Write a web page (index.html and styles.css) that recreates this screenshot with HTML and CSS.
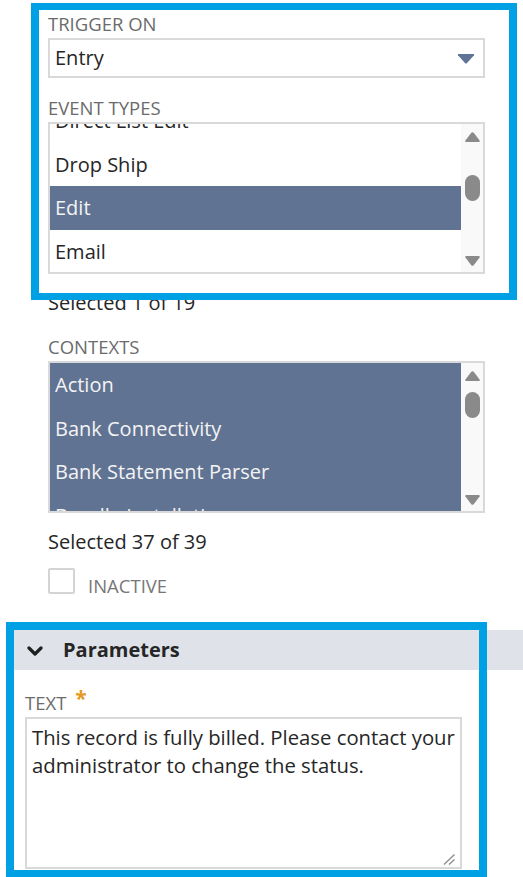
FILE: index.html
```html
<!DOCTYPE html>
<html lang="en">
<head>
<meta charset="utf-8">
<title>Workflow action</title>
<link rel="stylesheet" href="styles.css">
</head>
<body>
<div class="page">
  <section class="record">
    <div class="field">
      <div class="label">TRIGGER ON</div>
      <div class="select">
        <span class="select-value">Entry</span>
        <svg class="caret" width="18" height="10" viewBox="0 0 18 10"><path d="M1 1.2 Q0.4 0 1.8 0 H16.2 Q17.6 0 17 1.2 L9.8 9.2 Q9 10 8.2 9.2 Z" fill="#5f7394"/></svg>
      </div>
    </div>

    <div class="field field-gap">
      <div class="label">EVENT TYPES</div>
      <div class="listbox">
        <ul class="items items-scrolled">
          <li>Direct List Edit</li>
          <li>Drop Ship</li>
          <li class="selected">Edit</li>
          <li>Email</li>
        </ul>
        <div class="scrollbar">
          <svg class="arrow" width="15" height="10" viewBox="0 0 15 10"><path d="M6.3 0.8 Q7.5 -0.4 8.7 0.8 L14.6 8.4 Q15.2 10 13.6 10 H1.4 Q-0.2 10 0.4 8.4 Z" fill="#8a8a8a"/></svg>
          <div class="thumb thumb-events"></div>
          <svg class="arrow arrow-down" width="15" height="10" viewBox="0 0 15 10"><path d="M6.3 9.2 Q7.5 10.4 8.7 9.2 L14.6 1.6 Q15.2 0 13.6 0 H1.4 Q-0.2 0 0.4 1.6 Z" fill="#8a8a8a"/></svg>
        </div>
      </div>
      <div class="count">Selected 1 of 19</div>
    </div>

    <div class="field field-gap">
      <div class="label">CONTEXTS</div>
      <div class="listbox">
        <ul class="items">
          <li class="selected">Action</li>
          <li class="selected">Bank Connectivity</li>
          <li class="selected">Bank Statement Parser</li>
          <li class="selected">Bundle Installation</li>
        </ul>
        <div class="scrollbar">
          <svg class="arrow" width="15" height="10" viewBox="0 0 15 10"><path d="M6.3 0.8 Q7.5 -0.4 8.7 0.8 L14.6 8.4 Q15.2 10 13.6 10 H1.4 Q-0.2 10 0.4 8.4 Z" fill="#8a8a8a"/></svg>
          <div class="thumb thumb-contexts"></div>
          <svg class="arrow arrow-down" width="15" height="10" viewBox="0 0 15 10"><path d="M6.3 9.2 Q7.5 10.4 8.7 9.2 L14.6 1.6 Q15.2 0 13.6 0 H1.4 Q-0.2 0 0.4 1.6 Z" fill="#8a8a8a"/></svg>
        </div>
      </div>
      <div class="count">Selected 37 of 39</div>
    </div>

    <label class="checkbox-row">
      <span class="checkbox"></span>
      <span class="checkbox-label">INACTIVE</span>
    </label>
  </section>

  <section class="params">
    <div class="params-head">
      <svg class="chevron" width="16" height="10" viewBox="0 0 16 10"><path d="M2 2 L8 8 L14 2" fill="none" stroke="#1f1f1f" stroke-width="3.2" stroke-linecap="round" stroke-linejoin="round"/></svg>
      <span class="params-title">Parameters</span>
    </div>
    <div class="params-body">
      <div class="label">TEXT <span class="req">*</span></div>
      <div class="textarea">
        <p>This record is fully billed. Please contact your administrator to change the status.</p>
        <svg class="grip" width="12" height="11" viewBox="0 0 12 11"><path d="M1 10.5 L11.5 0.5 M6 10.5 L11.5 5.5" stroke="#8f8f8f" stroke-width="1.4" fill="none"/></svg>
      </div>
    </div>
  </section>

  <div class="callout callout-top"></div>
  <div class="callout callout-params"></div>
</div>
</body>
</html>
```

FILE: styles.css
```css
* {
  box-sizing: border-box;
}

html, body {
  margin: 0;
  padding: 0;
  background: #ffffff;
}

body {
  font-family: "Open Sans", "Liberation Sans", sans-serif;
  color: #262626;
  width: 523px;
  height: 877px;
  overflow: hidden;
}

.page {
  position: relative;
  width: 523px;
  height: 877px;
}

.record {
  padding: 13px 0 0 48px;
  width: 485px;
}

.field {
  display: flex;
  flex-direction: column;
}

.field-gap {
  margin-top: 19px;
}

.label {
  font-size: 18.5px;
  line-height: 22px;
  height: 22px;
  color: #6b6b6b;
  margin-bottom: 3px;
  white-space: nowrap;
}

.select {
  width: 437px;
  height: 40px;
  border: 2px solid #d9d9d9;
  display: flex;
  align-items: center;
  justify-content: space-between;
  padding: 0 8px 0 5px;
  font-size: 20px;
}

.select-value {
  line-height: 28px;
}

.caret {
  display: block;
  margin-top: 1px;
}

.listbox {
  width: 437px;
  height: 152px;
  border: 2px solid #d9d9d9;
  display: flex;
  overflow: hidden;
}

.items {
  list-style: none;
  margin: 0;
  padding: 0;
  flex: 1;
  min-width: 0;
  overflow: hidden;
}

.items li {
  height: 43.5px;
  line-height: 43.5px;
  padding-left: 5px;
  font-size: 20px;
  white-space: nowrap;
  color: #262626;
}

.items-scrolled li:first-child {
  margin-top: -25px;
}

.items li.selected {
  background: #607393;
  color: #f4f4f4;
}

.scrollbar {
  width: 22px;
  flex: none;
  background: #f9f9f9;
  display: flex;
  flex-direction: column;
  align-items: center;
  padding: 8px 0 6px 1px;
}

.arrow {
  display: block;
  flex: none;
}

.arrow-down {
  margin-top: auto;
}

.thumb {
  width: 15px;
  height: 26px;
  border-radius: 8px;
  background: #8a8a8a;
  flex: none;
}

.thumb-events {
  margin-top: 33px;
}

.thumb-contexts {
  margin-top: 11px;
}

.count {
  margin-top: 15px;
  font-size: 20px;
  line-height: 28px;
  height: 28px;
  white-space: nowrap;
}

.checkbox-row {
  display: flex;
  align-items: flex-start;
  height: 26px;
  margin-top: 12px;
}

.checkbox {
  width: 27px;
  height: 26px;
  border: 2px solid #d4d4d4;
  border-radius: 2px;
  background: #fff;
  flex: none;
}

.checkbox-label {
  margin: 7px 0 0 13px;
  font-size: 18.5px;
  line-height: 22px;
  color: #777777;
}

.params {
  margin-top: 36px;
  padding-left: 6px;
}

.params-head {
  height: 40px;
  background: #dfe3e9;
  display: flex;
  align-items: center;
  padding-left: 21px;
}

.chevron {
  display: block;
  margin-top: 1px;
}

.params-title {
  margin-left: 20px;
  font-size: 20px;
  font-weight: 700;
  line-height: 24px;
  color: #262626;
}

.params-body {
  padding: 22px 0 0 19px;
}

.req {
  color: #e39a1e;
  font-size: 21px;
  font-weight: 700;
  line-height: 0;
  margin-left: 4px;
  vertical-align: 4px;
}

.textarea {
  width: 437px;
  height: 152px;
  border: 2px solid #d9d9d9;
  padding: 4px 4px 0 5px;
  display: flex;
  flex-direction: column;
}

.textarea p {
  margin: 0;
  font-size: 20.3px;
  line-height: 28px;
  color: #262626;
}

.grip {
  display: block;
  margin: auto 1px 2px auto;
}

.callout {
  position: absolute;
  border-style: solid;
  border-color: #00a1e4;
  pointer-events: none;
}

.callout-top {
  left: 31px;
  top: 3px;
  width: 486px;
  height: 297px;
  border-width: 7px 8px 7px 8px;
}

.callout-params {
  left: 6px;
  top: 622px;
  width: 481px;
  height: 255px;
  border-width: 8px 8px 7px 8px;
}
```
